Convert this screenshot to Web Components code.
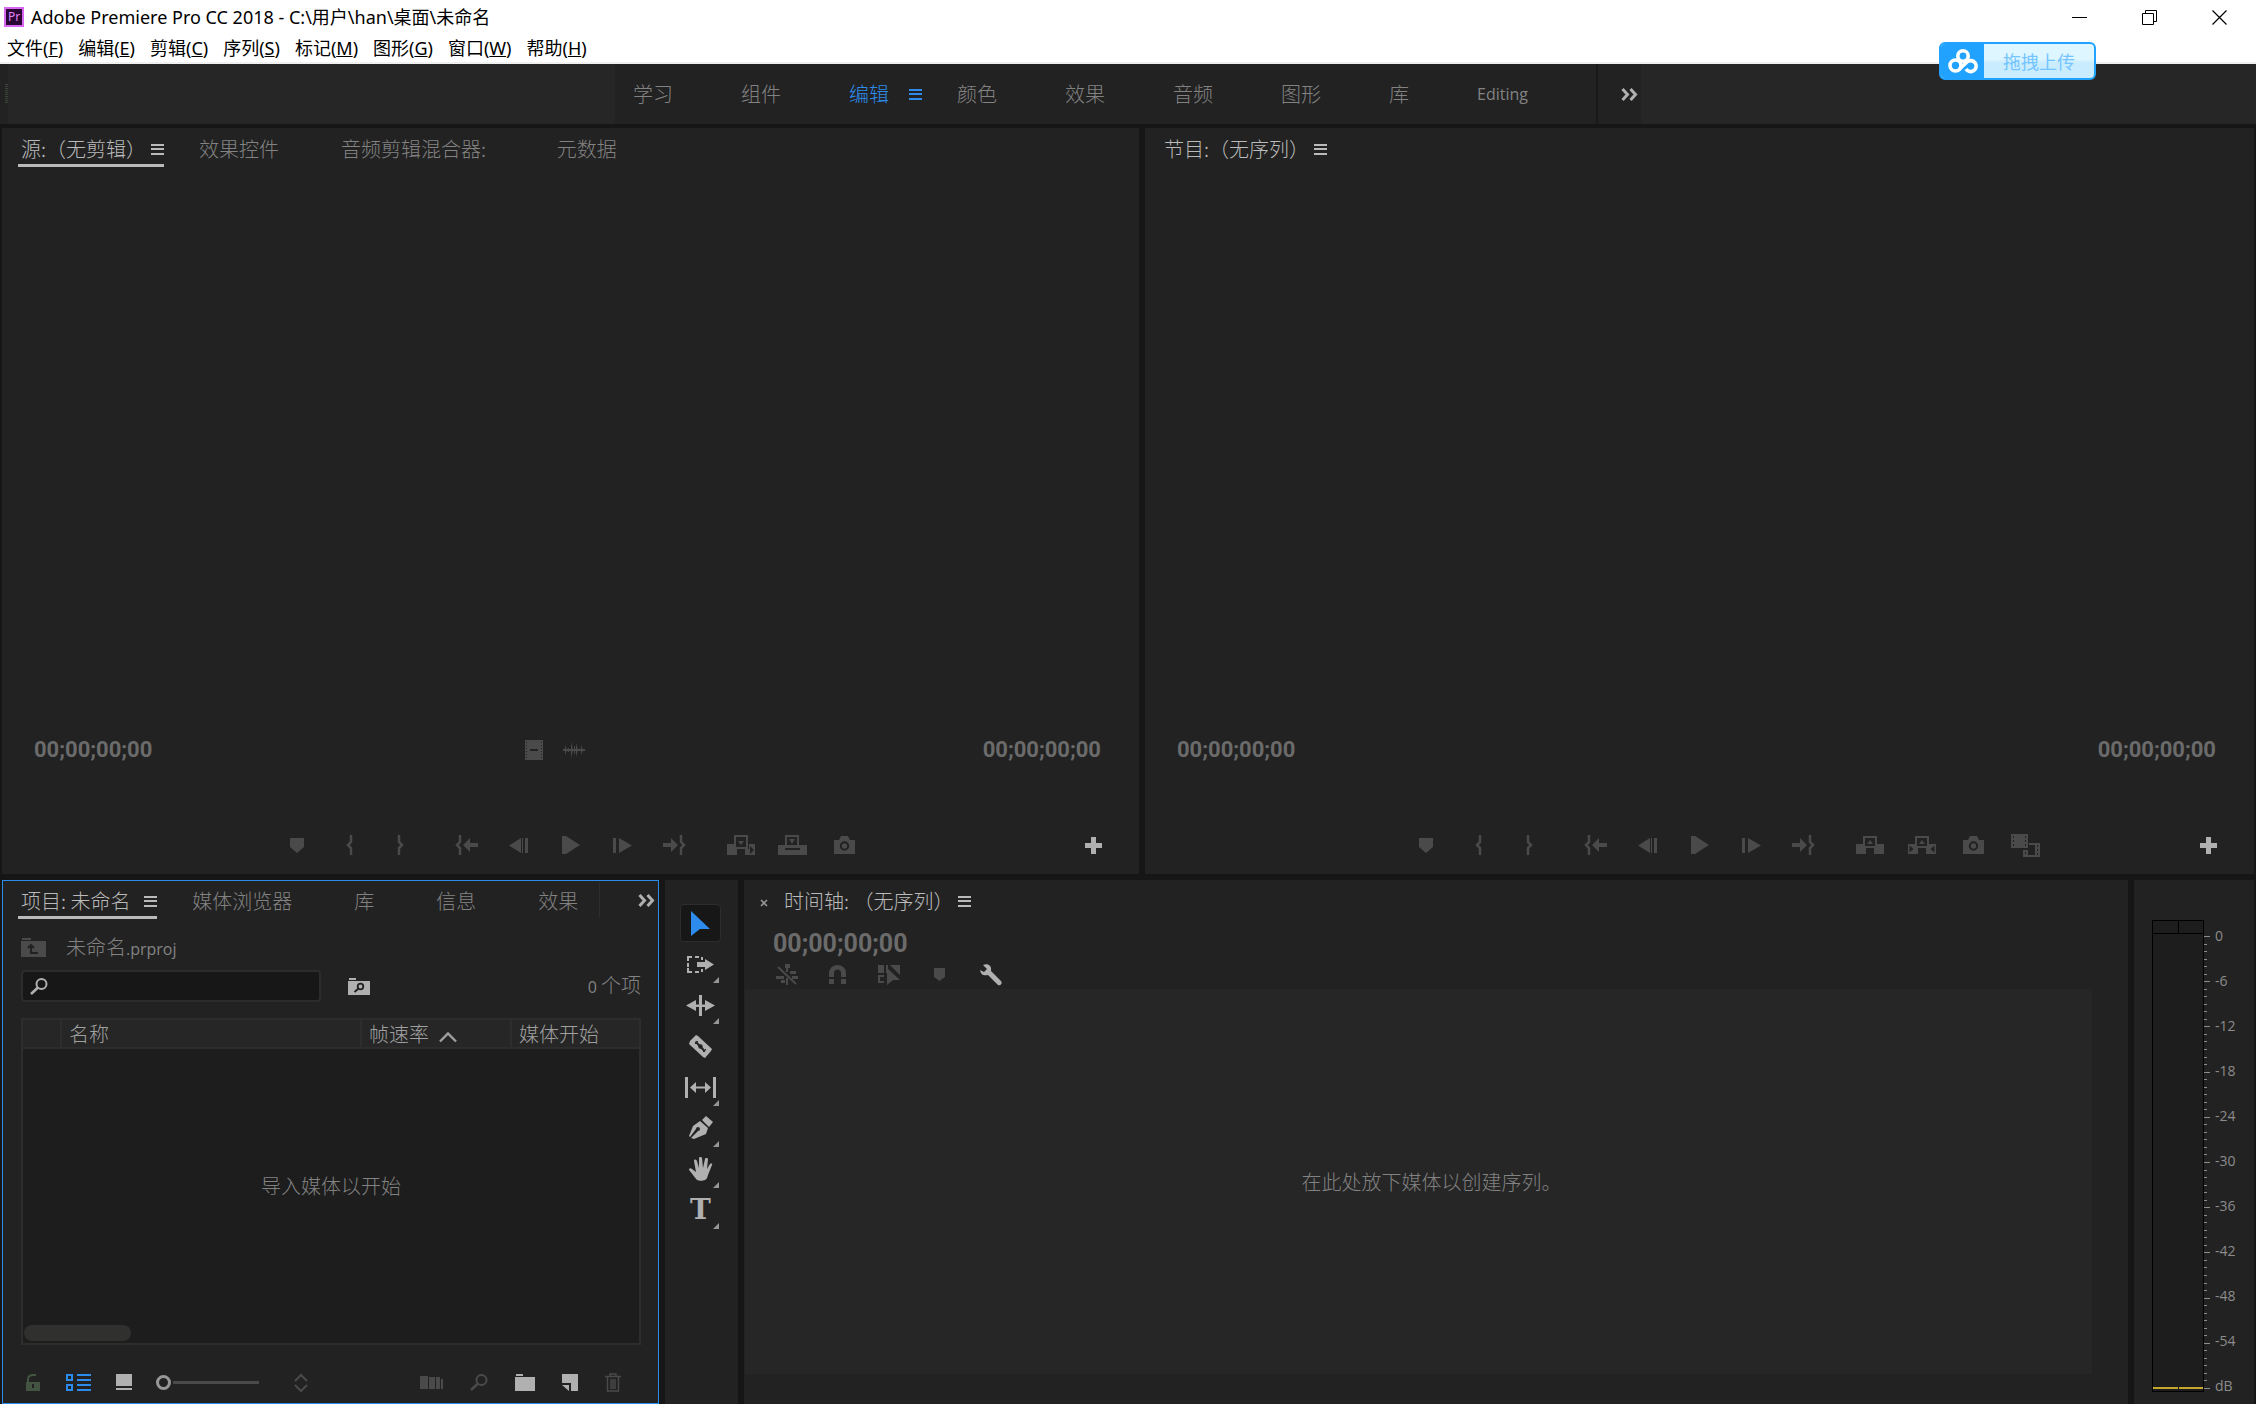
<!DOCTYPE html>
<html lang="zh-CN">
<head>
<meta charset="utf-8">
<title>Adobe Premiere Pro CC 2018</title>
<style>
	body {
		margin: 0;
		background: #161616;
		color: #828282;
		font: 20px/30px "Noto Sans CJK SC", sans-serif;
		font-weight: 300;
	}
</style>
</head>
<body>
<premiere-app></premiere-app>

<script>
(function() {
	// every icon is [width, height, markup], drawn in currentColor
	const ICONS = {
		menu: [13, 11, '<path d="M0 0h13v2H0zM0 4h13v2H0zM0 9h13v2H0z"/>'],
		more: [17, 13, '<path d="M1.5 1l5 5.500-5 5.500M9.500 1l5 5.500-5 5.500" fill="none" stroke="currentColor" stroke-width="3"/>'],
		minimize: [15, 15, '<path d="M0 7h15v1H0z"/>'],
		restore: [15, 15, '<path d="M.5 3.500h11v11H.5zM3.500 3.500V.5h11v11h-3" fill="none" stroke="currentColor"/>'],
		close: [15, 15, '<path d="M.5 .5l14 14M14.500 .5l-14 14" fill="none" stroke="currentColor" stroke-width="1.200"/>'],
		cross: [8, 8, '<path d="M1 1l6 6M7 1L1 7" fill="none" stroke="currentColor" stroke-width="1.600"/>'],
		cloud: [30, 24, '<g fill="none" stroke="currentColor" stroke-width="3.600"><circle cx="15" cy="7" r="5.200"/><circle cx="7.500" cy="16.500" r="5.500"/><path d="M11 20.500l8-7.500a5.500 5.500 0 1 1-1 7"/></g>'],
		film: [18, 20, '<path fill-rule="evenodd" d="M0 0h18v20H0zM1 2v1h1V2zM1 5v1h1V5zM1 8v1h1V8zM1 11v1h1v-1zM1 14v1h1v-1zM1 17v1h1v-1zM16 2v1h1V2zM16 5v1h1V5zM16 8v1h1V8zM16 11v1h1v-1zM16 14v1h1v-1zM16 17v1h1v-1zM5 9v2h8V9z"/>'],
		wave: [22, 16, '<path d="M0 7h22v2H0zM2 3l2 5-2 5zM5 6h1v4H5zM8 0l2 8-2 8zM11 4h1v8h-1zM13 1l2 7-2 7zM18 3l2 5-2 5z"/>'],
		marker: [14, 15, '<path d="M0 0h14v9l-7 6-7-6z"/>'],
		markin: [6, 20, '<path d="M5 0v7L2 10l3 3v7" fill="none" stroke="currentColor" stroke-width="2.500"/>'],
		markout: [6, 20, '<path d="M1 0v7l3 3-3 3v7" fill="none" stroke="currentColor" stroke-width="2.500"/>'],
		gotoin: [23, 20, '<path d="M5 0v7L2 10l3 3v7" fill="none" stroke="currentColor" stroke-width="2.500"/><path d="M8 10l7-7v5h8v4h-8v5z"/>'],
		gotoout: [23, 20, '<path d="M18 0v7l3 3-3 3v7" fill="none" stroke="currentColor" stroke-width="2.500"/><path d="M15 10L8 3v5H0v4h8v5z"/>'],
		stepback: [19, 15, '<path d="M0 7.500L12 0v15zM13 0h1v15h-1zM16 0h3v15h-3z"/>'],
		play: [18, 18, '<path d="M0 0h4l14 9-14 9H0z"/>'],
		stepforward: [19, 15, '<path d="M19 7.500L6 0v15zM0 0h3v15H0z"/>'],
		insert: [28, 20, '<path d="M0 9h7v5h3v6H0zM18 14v6h10V9h-6v5zM7 0h14v14H7z"/><path d="M9 2h10v10H9z" fill="#222"/><path d="M11 6h6l-3 4z"/><path d="M23 11l4 4-4 4z" fill="#222"/>'],
		overwrite: [29, 20, '<path d="M0 10h7V0h14v10h8v10H0z"/><path d="M9 2h10v8H9z" fill="#222"/><path d="M11 4h6l-3 5z"/><path d="M7 13h15v2H7z" fill="#222"/>'],
		lift: [28, 18, '<path d="M0 8h7V0h14v8h7v10H18v-6h-8v6H0z"/><path d="M9 2h10v8H9zM10 12h8v6h-8z" fill="#222"/><path d="M11 8h6l-3-4z"/>'],
		extract: [28, 18, '<path d="M0 8h7V0h14v8h7v10H18v-6h-8v6H0z"/><path d="M9 2h10v8H9zM10 12h8v6h-8zM1.500 9.500v7l4-3.500zM26.500 9.500v7l-4-3.500z" fill="#222"/><path d="M11 8h6l-3-4z"/>'],
		camera: [21, 18, '<path d="M0 4h5l2-4h7l2 4h5v14H0z"/><circle cx="10.500" cy="10" r="3.700" fill="none" stroke="#222" stroke-width="2"/>'],
		compare: [29, 23, '<path fill-rule="evenodd" d="M0 0h17v14H0zM2 2v2h1V2zM2 6v2h1V6zM2 10v2h1v-2zM14 2v2h1V2zM14 6v2h1V6zM14 10v2h1v-2z"/><path fill-rule="evenodd" d="M18 9h11v14H12v-7h5v5h7V11h-6zM26 11v2h1v-2zM26 15v2h1v-2zM26 19v2h1v-2zM14 18v2h1v-2z"/>'],
		plus: [17, 17, '<path d="M6 0h5v6h6v5h-6v6H6v-6H0V6h6z"/>'],
		upfolder: [25, 19, '<path d="M1 0h9v2H1zM0 3h25v16H0z"/><path d="M10 7v8h7M7 10l3-3 3 3" fill="none" stroke="#222" stroke-width="2"/>'],
		search: [18, 17, '<circle cx="11.500" cy="6" r="5" fill="none" stroke="currentColor" stroke-width="2"/><path d="M8 9.500L1 16" stroke="currentColor" stroke-width="2.600"/>'],
		searchfolder: [22, 17, '<path d="M1 0h7v2H1zM0 3h22v14H0z"/><circle cx="12.500" cy="8.500" r="2.800" fill="none" stroke="#222" stroke-width="1.800"/><path d="M10.500 10.500L6.500 14" stroke="#222" stroke-width="2"/>'],
		caret: [18, 10, '<path d="M1 9.500l8-8 8 8" fill="none" stroke="currentColor" stroke-width="2.400"/>'],
		lock: [14, 17, '<path fill-rule="evenodd" d="M0 8h14v9H0zM6 10v4h2v-4z"/><path d="M2 8V5q0-3 4-4h4" fill="none" stroke="currentColor" stroke-width="2"/>'],
		list: [25, 17, '<path fill-rule="evenodd" d="M0 0h7v7H0zM2 2v3h3V2zM0 10h7v7H0zM2 12v3h3v-3zM11 0h14v2H11zM11 5h14v2H11zM11 10h14v2H11zM11 15h14v2H11z"/>'],
		iconview: [16, 17, '<path d="M0 0h16v12H0zM0 14h16v2H0z"/>'],
		sort: [14, 18, '<path d="M1 7l6-6 6 6M1 11l6 6 6-6" fill="none" stroke="currentColor" stroke-width="2"/>'],
		automate: [23, 13, '<path d="M0 0h8v13H0zM9 1h6v12H9zM16 1h4v12h-4zM21 3h2v10h-2z"/>'],
		folder: [20, 17, '<path d="M1 0h7v2H1zM0 3h20v14H0z"/>'],
		newitem: [16, 17, '<path d="M0 0h16v17H9V9H0zM0 11h7v6z"/>'],
		trash: [16, 19, '<path d="M0 3.500h16M5 3V1h6v2M2.500 4v14h11V4M6 6v10M8 6v10M10 6v10" fill="none" stroke="currentColor" stroke-width="1.400"/>'],
		select: [19, 25, '<path d="M0 0l19 18H9l-9 7z"/>'],
		trackselect: [27, 17, '<path d="M1 5V1h4M8 1h4M15 1v3M1 7v4M1 12v4h4M8 16h4M15 16v-3" fill="none" stroke="currentColor" stroke-width="2"/><path d="M10 6h8V3l9 5.500-9 5.500v-3h-8z"/>'],
		ripple: [29, 21, '<path d="M13 0h3v21h-3zM0 10.500L10 5v4.500h9V5l10 5.500L19 16v-4h-9v4z"/>'],
		razor: [23, 23, '<path d="M7 0l2 1 14 13-1 2-6 7-2-1L0 9l1-3z"/><path d="M6.500 6.500l9.500 10" stroke="#222" stroke-width="2"/><circle cx="11.500" cy="11.500" r="2.200" fill="#222"/><path d="M6 9l3-3M14 17l3-3" stroke="#222"/>'],
		slip: [31, 21, '<path d="M0 0h3v21H0zM28 0h3v21h-3zM5 10.500L11 5v4.500h9V5l6 5.500-6 5.500v-4.500h-9V16z"/>'],
		pen: [24, 24, '<path d="M17 0l7 6-4 5-7-7zM11 5l8 7-2 6-12 5-3-1 7-7a2 2 0 1 0-2-2l-6 8-1-1L4 10z"/>'],
		hand: [24, 25, '<path d="M8 23C5 20 3 16 0 13c0-2 2-2 3-1l4 3L5 4c0-2 2-2 3 0l2 7V1c0-1.500 3-1.500 3 0l1 10 2-9c0-1.500 3-1 3 0l-1 10 3-5c1-1 3 0 2 1l-4 10c-1 3-1 4-3 5-2 1-6 1-8 0z"/>'],
		nest: [22, 21, '<path d="M10 3h2v5h-2zM9 0h5v4H9zM14 7h6v3h-6zM0 12h8v3H0zM16 12h6v3h-6zM5 16h4v3H5zM10 14h2v7h-2z"/><path d="M2 3l18 17" stroke="currentColor" stroke-width="2"/>'],
		magnet: [17, 19, '<path d="M0 8a8.500 8 0 0 1 17 0v4h-5V8a3.500 3.500 0 0 0-7 0v4H0zM0 14h5v5H0zM12 14h5v5h-5z"/>'],
		linked: [22, 20, '<path d="M0 0h6v8H0zM8 0h2v8H8zM12 0h10v10zM9 3l13 12h-7l-6 5zM0 10h6v2H2v4h4v2H0z"/>'],
		smallmarker: [11, 13, '<path d="M0 0h11v9l-5.500 4L0 9z"/>'],
		wrench: [22, 22, '<path d="M3 1c5-2 9 1 8 6l10 10c2 3-1 5-3 4L8 11c-4 1-7 0-8-5l4 2 3-3z"/>']
	};

	// shared by every element of the page
	const BASE = `
		*, *::before, *::after { box-sizing: border-box; }
		button {
			display: flex;
			align-items: center;
			justify-content: center;
			margin: 0;
			padding: 0;
			border: 0;
			background: none;
			color: inherit;
			font: inherit;
		}
	`;

	function define(name, render) {
		customElements.define(name, class extends HTMLElement {
			constructor() {
				super();
				this.attachShadow({ mode: 'open' });
			}

			connectedCallback() {
				this.shadowRoot.innerHTML = `<style>${BASE}</style>${render(this)}`;
			}
		});
	}

	const icon = name => `<pr-icon name="${name}"></pr-icon>`;
	const iconButton = ([name, label]) => `<button title="${label}">${icon(name)}</button>`;

	define('pr-icon', host => {
		const [width, height, markup] = ICONS[host.getAttribute('name')];

		return `
			<style>
				:host { display: inline-flex; flex: none; }
				svg { display: block; overflow: visible; }
			</style>
			<svg width="${width}" height="${height}" viewBox="0 0 ${width} ${height}" fill="currentColor" aria-hidden="true">${markup}</svg>
		`;
	});

	define('title-bar', () => `
		<style>
			:host {
				display: flex;
				align-items: center;
				height: 34px;
				padding: 0 29px 0 4px;
				background: #fff;
				color: #000;
				font: 18px/24px "Noto Sans", "Noto Sans CJK SC", sans-serif;
			}
			.logo {
				width: 20px;
				height: 20px;
				margin-right: 7px;
				border: 2px solid #d766f0;
				background: #2a0634;
				color: #e085f5;
				font-size: 12px;
				line-height: 15px;
				text-align: center;
			}
			.controls { display: flex; gap: 55px; margin-left: auto; }
		</style>
		<span class="logo">Pr</span>
		<slot></slot>
		<div class="controls">
			${[['minimize', '最小化'], ['restore', '还原'], ['close', '关闭']].map(iconButton).join('')}
		</div>
	`);

	const MENUS = [['文件', 'F'], ['编辑', 'E'], ['剪辑', 'C'], ['序列', 'S'], ['标记', 'M'], ['图形', 'G'], ['窗口', 'W'], ['帮助', 'H']];

	define('menu-bar', () => `
		<style>
			:host {
				display: flex;
				gap: 15px;
				height: 30px;
				padding-left: 7px;
				border-bottom: 2px solid #f0f0f0;
				background: #fff;
				color: #000;
				font: 18px/28px "Noto Sans", "Noto Sans CJK SC", sans-serif;
			}
		</style>
		${MENUS.map(([text, key]) => `<button><span>${text}(<u>${key}</u>)</span></button>`).join('')}
	`);

	const WORKSPACES = ['学习', '组件', '编辑', '颜色', '效果', '音频', '图形', '库', 'Editing'];

	define('workspace-bar', () => `
		<style>
			:host {
				display: flex;
				justify-content: center;
				height: 60px;
				padding-right: 8px;
				border-left: 8px solid #222;
				background: #262626;
			}
			.grip {
				width: 3px;
				height: 20px;
				margin: 20px auto 0 -3px;
				background: repeating-linear-gradient(#3c463c 0 1px, #222 1px 2px);
			}
			nav {
				display: flex;
				margin-right: auto;
				padding-left: 18px;
				background: #222;
			}
			nav button { padding-right: 68px; }
			.active { gap: 20px; padding-right: 35px; color: #2d8ceb; }
			.latin { font: 16px/30px "Open Sans", sans-serif; }
			nav .more { width: 45px; padding: 0 0 0 20px; border-left: 2px solid #191919; color: #b0b0b0; }
		</style>
		<span class="grip"></span>
		<nav>
			${WORKSPACES.map(name => {
				if (name === '编辑') return `<button class="active" style="padding-right: 35px">${name}${icon('menu')}</button>`;
				return `<button class="${name === 'Editing' ? 'latin' : ''}">${name}</button>`;
			}).join('')}
			<button class="more" title="更多">${icon('more')}</button>
		</nav>
	`);

	define('upload-badge', () => `
		<style>
			:host { position: absolute; top: 42px; right: 160px; }
			button {
				width: 157px;
				height: 38px;
				overflow: hidden;
				border: 2px solid #22a2ff;
				border-radius: 6px;
				background: linear-gradient(#def6ff 45%, #c9edff 55%);
				color: #73c4ff;
				font-size: 18px;
				font-weight: 400;
			}
			span { display: flex; align-items: center; justify-content: center; width: 43px; height: 38px; background: #22a2ff; color: #fff; }
			slot { display: block; flex: 1; }
		</style>
		<button><span>${icon('cloud')}</span><slot></slot></button>
	`);

	define('panel-tab', host => `
		<style>
			:host { display: block; flex: none; }
			span { white-space: pre; }
			button {
				height: 39px;
				padding: 6px 0 0 3px;
				border-bottom: 3px solid transparent;
			}
			:host(:not([active])) button { padding-right: 27px; }
			:host([active]) button { gap: 5px; color: #bababa; }
			:host([underline]) button { border-color: #bababa; }
		</style>
		<button role="tab"><span><slot></slot></span>${host.hasAttribute('active') ? icon('menu') : ''}</button>
	`);

	define('pr-panel', () => `
		<style>
			:host {
				display: flex;
				flex-direction: column;
				min-width: 0;
				min-height: 0;
				background: #222;
			}
			:host([focused]) { outline: 1px solid #2d8ceb; outline-offset: -1px; }
			header { display: flex; padding: 0 4px 0 16px; }
			.tabs { display: flex; flex: 1; gap: 32px; min-width: 0; overflow: hidden; }
		</style>
		<header>
			<slot name="before"></slot>
			<div class="tabs" role="tablist"><slot name="tabs"></slot></div>
			<slot name="after"></slot>
		</header>
		<slot></slot>
	`);

	const TRANSPORT = [
		[['marker', '添加标记'], ['markin', '标记入点'], ['markout', '标记出点']],
		[['gotoin', '转到入点'], ['stepback', '后退一帧'], ['play', '播放'], ['stepforward', '前进一帧'], ['gotoout', '转到出点']]
	];
	const EXPORTS = {
		source: [['insert', '插入'], ['overwrite', '覆盖'], ['camera', '导出帧']],
		program: [['lift', '提升'], ['extract', '提取'], ['camera', '导出帧']]
	};

	define('monitor-view', host => {
		const kind = host.getAttribute('kind');
		const groups = [...TRANSPORT, EXPORTS[kind]];

		return `
			<style>
				:host { display: flex; flex: 1; flex-direction: column; justify-content: flex-end; color: #4a4a4a; }
				.time, .transport { display: grid; grid-template-columns: 1fr auto 1fr; align-items: center; height: 30px; }
				.time {
					margin-bottom: 65px;
					padding: 0 38px 0 32px;
				}
				time { color: #6b6b6b; font: bold 22px/30px Roboto, "Liberation Sans", sans-serif; }
				time:last-child { text-align: right; }
				.drag { display: flex; gap: 20px; align-items: center; margin-right: 26px; }
				.transport { margin-bottom: 14px; padding: 0 37px; }
				.groups { display: flex; gap: 14px; grid-column: 2; }
				.group { display: flex; }
				.group button, .compare { width: 52px; height: 30px; }
				.tail { display: flex; }
				.add { margin-left: auto; color: #b0b0b0; }
			</style>
			<div class="time">
				<time>00;00;00;00</time>
				<div class="drag">${kind === 'source' ? icon('film') + icon('wave') : ''}</div>
				<time>00;00;00;00</time>
			</div>
			<div class="transport">
				<div class="groups">
					${groups.map(group => `<div class="group">${group.map(iconButton).join('')}</div>`).join('')}
				</div>
				<div class="tail">
					${kind === 'program' ? `<button class="compare" title="比较视图">${icon('compare')}</button>` : ''}
					<button class="add" title="按钮编辑器">${icon('plus')}</button>
				</div>
			</div>
		`;
	});

	define('project-bin', () => `
		<style>
			:host { display: flex; flex: 1; flex-direction: column; min-height: 0; padding: 0 18px 0 19px; }
			.path { display: flex; gap: 20px; align-items: center; height: 51px; padding-top: 6px; }
			.path pr-icon { color: #4a4a4a; }
			.latin { font: 16px/30px "Open Sans", sans-serif; }
			.filter { display: flex; align-items: center; height: 32px; color: #b0b0b0; }
			label {
				display: flex;
				align-items: center;
				width: 300px;
				height: 32px;
				padding-left: 7px;
				border: 2px solid #2c2c2c;
				border-radius: 4px;
				background: #171717;
			}
			input[type=text] { flex: 1; min-width: 0; border: 0; background: none; color: #b0b0b0; font: inherit; }
			.filter button { margin-left: 27px; }
			output { margin-left: auto; color: #828282; }
			.bin { display: flex; flex: 1; flex-direction: column; margin-top: 16px; border: 2px solid #2d2d2d; background: #1d1d1d; }
			table { width: 100%; border-collapse: collapse; table-layout: fixed; background: #262626; color: #a0a0a0; }
			th { height: 28px; padding: 0 0 0 7px; border-bottom: 2px solid #2d2d2d; border-left: 2px solid #2d2d2d; font-weight: inherit; line-height: 26px; text-align: left; }
			th:first-child { border-left: 0; }
			th pr-icon { margin-left: 10px; }
			p { display: grid; flex: 1; place-items: center; margin: 0; }
			.thumb { width: 107px; height: 16px; margin: 2px 1px; border-radius: 8px; background: #30302e; }
			footer { display: flex; align-items: center; height: 59px; padding: 16px 20px 0 5px; color: #4a4a4a; }
			.lock { color: #435443; }
			.list { margin: 0 25px 0 26px; color: #2d8ceb; }
			.light { color: #b0b0b0; }
			input[type=range] { width: 104px; height: 18px; margin: 0 34px 0 24px; appearance: none; background: linear-gradient(#4a4a4a, #4a4a4a) 17px 50% / 86px 3px no-repeat; }
			input[type=range]::-webkit-slider-thumb { width: 15px; height: 15px; appearance: none; border: 3px solid #969896; border-radius: 50%; background: #222; }
			.actions { display: flex; gap: 27px; align-items: center; margin-left: auto; }
		</style>
		<div class="path">${icon('upfolder')}<span>未命名<span class="latin">.prproj</span></span></div>
		<div class="filter">
			<label>${icon('search')}<input type="text" aria-label="搜索"></label>
			<button title="新建搜索素材箱">${icon('searchfolder')}</button>
			<output><span class="latin">0 </span>个项</output>
		</div>
		<div class="bin">
			<table>
				<colgroup><col style="width: 38px"><col style="width: 300px"><col style="width: 150px"><col></colgroup>
				<thead><tr><th></th><th>名称</th><th>帧速率${icon('caret')}</th><th>媒体开始</th></tr></thead>
			</table>
			<p>导入媒体以开始</p>
			<div class="thumb"></div>
		</div>
		<footer>
			<button class="lock" title="项目可写">${icon('lock')}</button>
			<button class="list" title="列表视图">${icon('list')}</button>
			<button class="light" title="图标视图">${icon('iconview')}</button>
			<input type="range" value="0" aria-label="缩放">
			<button title="排序图标">${icon('sort')}</button>
			<div class="actions">
				${iconButton(['automate', '自动匹配序列'])}
				${iconButton(['search', '查找'])}
				<button class="light" title="新建素材箱">${icon('folder')}</button>
				<button class="light" title="新建项">${icon('newitem')}</button>
				${iconButton(['trash', '清除'])}
			</div>
		</footer>
	`);

	// [icon, label, has a flyout]
	const TOOLS = [
		['select', '选择工具', false],
		['trackselect', '向前选择轨道工具', true],
		['ripple', '波纹编辑工具', true],
		['razor', '剃刀工具', false],
		['slip', '外滑工具', true],
		['pen', '钢笔工具', true],
		['hand', '手形工具', true],
		['type', '文字工具', true]
	];

	define('tool-box', () => `
		<style>
			:host {
				display: flex;
				flex-direction: column;
				gap: 3px;
				align-items: center;
				padding: 24px 2px 0 0;
				background: #222;
				color: #b0b0b0;
			}
			button { position: relative; width: 41px; height: 38px; border-radius: 4px; }
			button:first-of-type { border: 1px solid #2d2d2d; background: #171717; color: #2d8ceb; }
			.flyout::after {
				content: "";
				position: absolute;
				right: 2px;
				bottom: 0;
				border: 3px solid transparent;
				border-right-color: #969696;
				border-bottom-color: #969696;
			}
			.type { font: bold 28px/34px "DejaVu Serif", serif; }
		</style>
		${TOOLS.map(([name, label, flyout]) => `
			<button class="${flyout ? 'flyout' : ''}" title="${label}">${name === 'type' ? '<span class="type">T</span>' : icon(name)}</button>
		`).join('')}
	`);

	define('timeline-view', () => `
		<style>
			:host { display: flex; flex: 1; flex-direction: column; min-height: 0; }
			time { margin: 12px 0 0 29px; color: #6b6b6b; font: bold 25px/26px Roboto, "Liberation Sans", sans-serif; }
			.options { display: flex; height: 32px; padding: 3px 0 0 17px; color: #4a4a4a; }
			.options button { width: 51px; }
			.options button:last-child { color: #b0b0b0; }
			.drop { display: grid; flex: 1; place-items: center; margin: 0 36px 30px 1px; padding: 0 0 0 26px; background: #262626; }
		</style>
		<time>00;00;00;00</time>
		<div class="options">
			${[['nest', '嵌套序列'], ['magnet', '对齐'], ['linked', '链接选择项'], ['smallmarker', '添加标记'], ['wrench', '时间轴显示设置']].map(iconButton).join('')}
		</div>
		<div class="drop"><slot></slot></div>
	`);

	const LEVELS = ['0', '-6', '-12', '-18', '-24', '-30', '-36', '-42', '-48', '-54'];

	define('audio-meter', () => `
		<style>
			:host {
				display: flex;
				padding: 40px 0 12px 18px;
				background: #222;
				color: #8c8c8c;
				font: 14px/0 "Open Sans", sans-serif;
			}
			.meter { display: flex; flex-direction: column; justify-content: space-between; width: 52px; border: 1px solid #000; background: #1d1d1d; }
			.clip, .peak { display: grid; grid-template-columns: 1fr 1fr; }
			.clip { height: 13px; border-bottom: 1px solid #000; }
			.clip i + i { border-left: 1px solid #000; }
			.peak { gap: 1px; height: 4px; }
			.peak i { height: 2px; background: #c4a72c; }
			.ticks, .labels { display: flex; flex-direction: column; margin: 16px 0 3px; }
			.step { display: flex; flex: 1; flex-direction: column; width: 6px; }
			.step i { flex: 1; width: 3px; border-top: 1px solid #8c8c8c; }
			.step i:first-child { width: 6px; }
			.end { height: 0; border-top: 1px solid #8c8c8c; }
			.labels { padding: 0 0 3px 5px; }
			.labels span { flex: 1; }
			.labels .unit { flex: none; height: 0; line-height: 0; }
		</style>
		<div class="meter">
			<div class="clip"><i></i><i></i></div>
			<div class="peak"><i></i><i></i></div>
		</div>
		<div class="ticks">
			${LEVELS.map(() => `<div class="step">${'<i></i>'.repeat(6)}</div>`).join('')}
			<div class="end"></div>
		</div>
		<div class="labels">
			${LEVELS.map(level => `<span>${level}</span>`).join('')}
			<span class="unit">dB</span>
		</div>
	`);

	define('premiere-app', () => `
		<style>
			:host { display: flex; flex-direction: column; height: 100vh; overflow: hidden; }
			.row { display: grid; gap: 6px; padding: 0 2px; min-height: 0; }
			.monitors { flex: 746; grid-template-columns: 1137fr 1109fr; margin: 4px 0 6px; }
			.editing { flex: 524; grid-template-columns: 657fr 73px 1384fr 120px; }
			.overflow { height: 36px; margin-top: 2px; padding-left: 38px; border-left: 1px solid #2d2d2d; color: #b0b0b0; }
			.close { padding: 6px 13px 0 0; color: #969696; }
		</style>
		<title-bar>Adobe Premiere Pro CC 2018 - C:\\用户\\han\\桌面\\未命名</title-bar>
		<menu-bar></menu-bar>
		<workspace-bar></workspace-bar>
		<div class="row monitors">
			<pr-panel>
				<panel-tab slot="tabs" active underline>源:（无剪辑）</panel-tab>
				<panel-tab slot="tabs">效果控件</panel-tab>
				<panel-tab slot="tabs">音频剪辑混合器:  </panel-tab>
				<panel-tab slot="tabs">元数据</panel-tab>
				<monitor-view kind="source"></monitor-view>
			</pr-panel>
			<pr-panel>
				<panel-tab slot="tabs" active>节目:（无序列）</panel-tab>
				<monitor-view kind="program"></monitor-view>
			</pr-panel>
		</div>
		<div class="row editing">
			<pr-panel focused>
				<panel-tab slot="tabs" active underline>项目: 未命名  </panel-tab>
				<panel-tab slot="tabs">媒体浏览器</panel-tab>
				<panel-tab slot="tabs">库</panel-tab>
				<panel-tab slot="tabs">信息</panel-tab>
				<panel-tab slot="tabs">效果</panel-tab>
				<button slot="after" class="overflow" title="更多">${icon('more')}</button>
				<project-bin></project-bin>
			</pr-panel>
			<tool-box></tool-box>
			<pr-panel>
				<button slot="before" class="close" title="关闭">${icon('cross')}</button>
				<panel-tab slot="tabs" active>时间轴: （无序列）</panel-tab>
				<timeline-view>在此处放下媒体以创建序列。</timeline-view>
			</pr-panel>
			<audio-meter></audio-meter>
		</div>
		<upload-badge>拖拽上传</upload-badge>
	`);
})();
</script>
</body>
</html>
